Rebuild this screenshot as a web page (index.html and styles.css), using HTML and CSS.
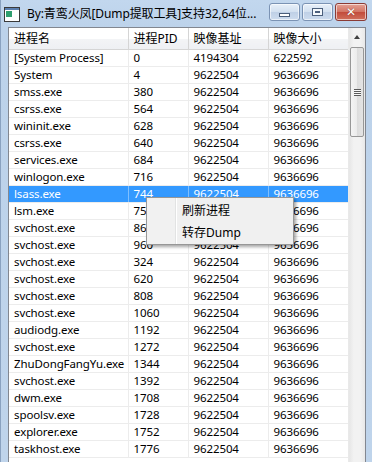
FILE: index.html
```html
<!DOCTYPE html>
<html lang="zh-CN">
<head>
    <meta charset="UTF-8">
    <title>Dump提取工具</title>
    <link rel="stylesheet" href="styles.css">
</head>
<body>
    <div class="window">
        <div class="titlebar">
            <svg class="app-icon" width="16" height="15" viewBox="0 0 16 15">
                <rect x="0.5" y="0.5" width="15" height="14" fill="#ffffff" stroke="#3a3a3a"/>
                <rect x="1" y="1" width="14" height="2" fill="#5a7fb0"/>
                <rect x="2" y="4" width="6" height="6" fill="#2f9f6f"/>
            </svg>
            <span class="title">By:青鸾火凤[Dump提取工具]支持32,64位...</span>
            <div class="caption-buttons">
                <div class="cap-btn">
                    <span class="glyph-min"></span>
                </div>
                <div class="cap-btn">
                    <span class="glyph-max"></span>
                </div>
                <div class="cap-btn close">
                    <span class="glyph-close">&#10005;</span>
                </div>
            </div>
        </div>

        <div class="listview">
            <div class="list-body">
                <table class="grid">
                    <colgroup>
                        <col style="width:119px">
                        <col style="width:60px">
                        <col style="width:80px">
                        <col style="width:80px">
                    </colgroup>
                    <tr>
                        <th>进程名</th>
                        <th>进程PID</th>
                        <th>映像基址</th>
                        <th>映像大小</th>
                    </tr>
                    <tr><td>[System Process]</td><td>0</td><td>4194304</td><td>622592</td></tr>
                    <tr><td>System</td><td>4</td><td>9622504</td><td>9636696</td></tr>
                    <tr><td>smss.exe</td><td>380</td><td>9622504</td><td>9636696</td></tr>
                    <tr><td>csrss.exe</td><td>564</td><td>9622504</td><td>9636696</td></tr>
                    <tr><td>wininit.exe</td><td>628</td><td>9622504</td><td>9636696</td></tr>
                    <tr><td>csrss.exe</td><td>640</td><td>9622504</td><td>9636696</td></tr>
                    <tr><td>services.exe</td><td>684</td><td>9622504</td><td>9636696</td></tr>
                    <tr><td>winlogon.exe</td><td>716</td><td>9622504</td><td>9636696</td></tr>
                    <tr class="selected"><td>lsass.exe</td><td>744</td><td>9622504</td><td>9636696</td></tr>
                    <tr><td>lsm.exe</td><td>752</td><td>9622504</td><td>9636696</td></tr>
                    <tr><td>svchost.exe</td><td>860</td><td>9622504</td><td>9636696</td></tr>
                    <tr><td>svchost.exe</td><td>960</td><td>9622504</td><td>9636696</td></tr>
                    <tr><td>svchost.exe</td><td>324</td><td>9622504</td><td>9636696</td></tr>
                    <tr><td>svchost.exe</td><td>620</td><td>9622504</td><td>9636696</td></tr>
                    <tr><td>svchost.exe</td><td>808</td><td>9622504</td><td>9636696</td></tr>
                    <tr><td>svchost.exe</td><td>1060</td><td>9622504</td><td>9636696</td></tr>
                    <tr><td>audiodg.exe</td><td>1192</td><td>9622504</td><td>9636696</td></tr>
                    <tr><td>svchost.exe</td><td>1272</td><td>9622504</td><td>9636696</td></tr>
                    <tr><td>ZhuDongFangYu.exe</td><td>1344</td><td>9622504</td><td>9636696</td></tr>
                    <tr><td>svchost.exe</td><td>1392</td><td>9622504</td><td>9636696</td></tr>
                    <tr><td>dwm.exe</td><td>1708</td><td>9622504</td><td>9636696</td></tr>
                    <tr><td>spoolsv.exe</td><td>1728</td><td>9622504</td><td>9636696</td></tr>
                    <tr><td>explorer.exe</td><td>1752</td><td>9622504</td><td>9636696</td></tr>
                    <tr><td>taskhost.exe</td><td>1776</td><td>9622504</td><td>9636696</td></tr>
                </table>
            </div>

            <div class="scrollbar">
                <div class="scroll-arrow"></div>
                <div class="scroll-thumb">
                    <span class="grip"></span>
                </div>
            </div>
        </div>

        <!-- right-click menu over the selected row -->
        <div class="context-menu">
            <div class="menu-item">刷新进程</div>
            <div class="menu-item">转存Dump</div>
        </div>
    </div>
</body>
</html>
```

FILE: styles.css
```css
/* General */
* {
    margin: 0;
    padding: 0;
    box-sizing: border-box;
}

body {
    width: 372px;
    height: 462px;
    overflow: hidden;
    background: #bcd2ea;
    font-family: "Noto Sans", "Noto Sans CJK SC", sans-serif;
    font-size: 12px;
    color: #000;
}

/* Window frame */
.window {
    position: relative;
    width: 372px;
    height: 462px;
    padding: 0 6px 0 7px;
    background: linear-gradient(#c2d7ee, #bcd2ea 30px, #bfd4eb);
    border-left: 1px solid #8aa2c0;
}

.titlebar {
    height: 27px;
    display: flex;
    align-items: center;
    margin-left: -4px;
}

.app-icon {
    flex: none;
    margin-right: 7px;
    margin-top: 1px;
}

.title {
    flex: 1;
    white-space: nowrap;
    overflow: hidden;
    line-height: 16px;
    letter-spacing: -0.1px;
}

.caption-buttons {
    display: flex;
    gap: 2px;
    align-self: flex-start;
    margin-top: 3px;
    margin-right: -1px;
}

.cap-btn {
    width: 31px;
    height: 18px;
    border: 1px solid #7b93b4;
    border-radius: 3px;
    background: linear-gradient(#e8f0f9, #d2e0f0 50%, #bfd0e6 51%, #cddcee);
    display: flex;
    align-items: center;
    justify-content: center;
    box-shadow: inset 0 0 0 1px rgba(255, 255, 255, 0.6);
}

.cap-btn.close {
    width: 32px;
    border-color: #8a3b35;
    background: linear-gradient(#e4a195, #d27463 50%, #c24b3b 51%, #d0705c);
}

.glyph-min {
    width: 11px;
    height: 4px;
    margin-top: 5px;
    background: #fff;
    border: 1px solid #4b5f7c;
}

.glyph-max {
    width: 11px;
    height: 8px;
    border: 1px solid #4b5f7c;
    box-shadow: inset 0 0 0 2px #f4f8fc, inset 0 0 0 3px #4b5f7c;
}

.glyph-close {
    color: #fff;
    font-family: "DejaVu Sans", sans-serif;
    font-size: 12px;
    font-weight: bold;
    line-height: 12px;
    text-shadow: 0 0 1px #6a2018;
}

/* List view */
.listview {
    display: flex;
    height: 440px;
    background: #fff;
    border: 1px solid #828790;
    border-bottom: none;
}

.list-body {
    width: 339px;
    overflow: hidden;
}

.grid {
    table-layout: fixed;
    width: 339px;
    border-collapse: collapse;
}

.grid th {
    height: 21px;
    padding: 0 5px;
    font-weight: normal;
    text-align: left;
    background: linear-gradient(#ffffff, #ffffff 50%, #f3f4f6 51%, #eef0f3);
    border-right: 1px solid #d5d5d5;
    border-bottom: 1px solid #d5d5d5;
    white-space: nowrap;
}

.grid td {
    height: 17px;
    padding: 0 2px 0 5px;
    font-size: 11.5px;
    letter-spacing: -0.1px;
    line-height: 16px;
    white-space: nowrap;
    overflow: hidden;
    border-right: 1px solid #ececec;
    border-bottom: 1px solid #ececec;
}

.grid tr.selected td {
    background: #3399ff;
    color: #fff;
    border-right-color: #7fbfff;
}

/* Scrollbar */
.scrollbar {
    width: 17px;
    background: linear-gradient(90deg, #e6e6e6, #f2f2f2 30%, #f2f2f2 70%, #e8e8e8);
    border-left: 1px solid #e9e9e9;
}

.scroll-arrow {
    height: 19px;
    position: relative;
}

.scroll-arrow::after {
    content: "";
    position: absolute;
    left: 5px;
    top: 7px;
    border-left: 3px solid transparent;
    border-right: 3px solid transparent;
    border-bottom: 4px solid #404040;
}

.scroll-thumb {
    height: 90px;
    margin: 0 1px;
    border: 1px solid #979797;
    border-radius: 2px;
    background: linear-gradient(90deg, #f4f4f4, #ebebeb 50%, #dcdcdc 51%, #e4e4e4);
    display: flex;
    align-items: center;
    justify-content: center;
}

.grip {
    width: 7px;
    height: 7px;
    background: repeating-linear-gradient(#5a5a5a 0 1px, #f8f8f8 1px 2px);
}

/* Context menu */
.context-menu {
    position: absolute;
    left: 145px;
    top: 197px;
    width: 148px;
    height: 48px;
    padding: 2px;
    background: linear-gradient(90deg, #f1f1f1 0 28px, #e2e3e3 28px 29px, #ffffff 29px 30px, #f0f0f0 30px);
    border: 1px solid #979797;
    box-shadow: 2px 2px 3px rgba(0, 0, 0, 0.35);
}

.menu-item {
    height: 22px;
    line-height: 22px;
    padding-left: 33px;
    white-space: nowrap;
}
```
